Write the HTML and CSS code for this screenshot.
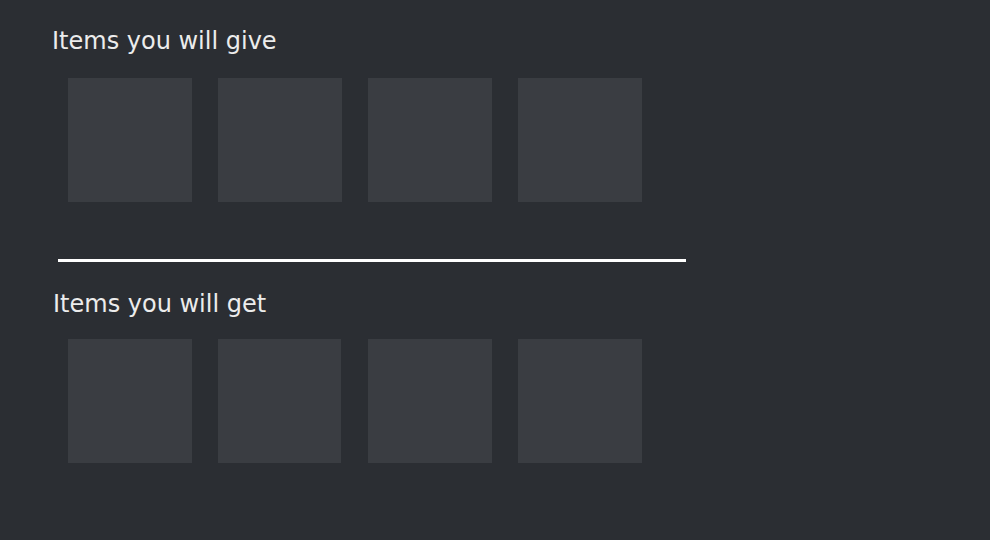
FILE: index.html
```html
<!DOCTYPE html>
<html>
<head>
<meta charset="utf-8">
<link rel="stylesheet" href="styles.css">
</head>
<body>
<div class="page">
  <h2 class="title title-give">Items you will give</h2>
  <div class="items items-give">
    <div class="item"></div>
    <div class="item"></div>
    <div class="item"></div>
    <div class="item"></div>
  </div>
  <div class="divider"></div>
  <h2 class="title title-get">Items you will get</h2>
  <div class="items items-get">
    <div class="item"></div>
    <div class="item item-narrow"></div>
    <div class="item"></div>
    <div class="item"></div>
  </div>
</div>
</body>
</html>
```
FILE: styles.css
```css
html, body {
  margin: 0;
  padding: 0;
  background: #2b2e33;
  height: 100%;
}
.page {
  display: flex;
  flex-direction: column;
  align-items: flex-start;
}
.title {
  margin: 0;
  font-family: "DejaVu Sans", sans-serif;
  font-weight: normal;
  font-size: 24px;
  line-height: 28px;
  color: #ececec;
}
.title-give {
  margin-top: 27px;
  margin-left: 52px;
}
.title-get {
  margin-top: 28px;
  margin-left: 53px;
}
.items {
  display: flex;
  gap: 26px;
  margin-left: 68px;
}
.items-give {
  margin-top: 23px;
}
.items-get {
  margin-top: 21px;
}
.item {
  width: 124px;
  height: 124px;
  background: #3a3d42;
}
.item-narrow {
  width: 123px;
  margin-right: 1px;
}
.divider {
  margin-top: 57px;
  margin-left: 58px;
  width: 628px;
  height: 3px;
  background: #ffffff;
}
```
